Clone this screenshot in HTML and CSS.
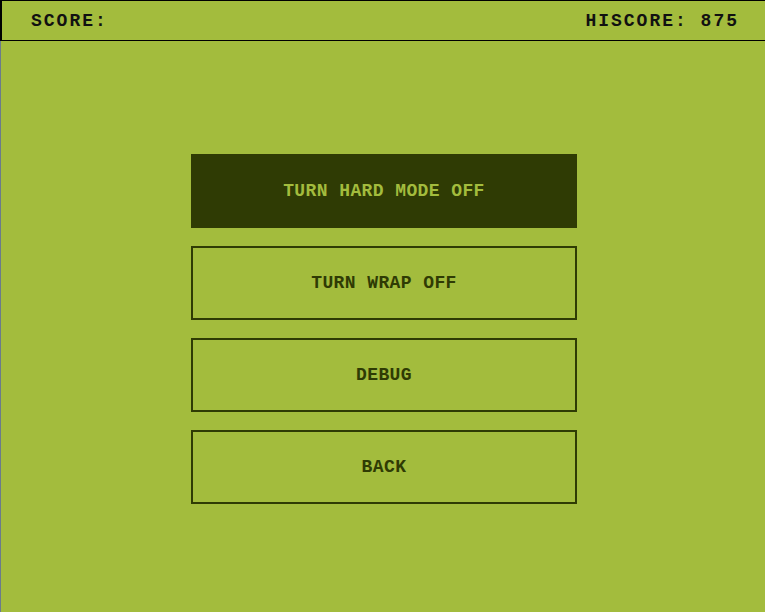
FILE: index.html
```html
<!DOCTYPE html>
<html>
<head>
<meta charset="utf-8">
<link rel="stylesheet" href="styles.css">
</head>
<body>
<div class="page">
  <header class="topbar">
    <span class="score">SCORE:</span>
    <span class="hiscore">HISCORE: 875</span>
  </header>
  <main class="stage">
    <nav class="menu">
      <button class="btn btn-active">TURN HARD MODE OFF</button>
      <button class="btn">TURN WRAP OFF</button>
      <button class="btn">DEBUG</button>
      <button class="btn">BACK</button>
    </nav>
  </main>
</div>
</body>
</html>
```
FILE: styles.css
```css
html, body {
  margin: 0;
  padding: 0;
  height: 100%;
}
body {
  background: #a3bc3d;
  font-family: "Courier New", Courier, FreeMono, "Nimbus Mono PS", "Liberation Mono", monospace;
  overflow: hidden;
}
.page {
  display: flex;
  flex-direction: column;
  height: 100%;
}
.topbar {
  display: flex;
  justify-content: space-between;
  align-items: center;
  height: 39px;
  border-top: 1px solid #000;
  border-bottom: 1px solid #000;
  border-left: 2px solid #000;
  padding: 0 28px 0 29px;
  font-weight: bold;
  font-size: 18px;
  letter-spacing: 2px;
  color: #111;
}
.hiscore {
  margin-right: -2px;
}
.stage {
  flex: 1;
  border-left: 1px solid #6b7b8c;
}
.menu {
  display: flex;
  flex-direction: column;
  align-items: center;
  gap: 18px;
  padding: 113px 0 0 2px;
}
.btn {
  width: 386px;
  height: 74px;
  box-sizing: border-box;
  border: 2px solid #2f3b04;
  background: transparent;
  color: #2f3b04;
  font-family: "Courier New", Courier, FreeMono, "Nimbus Mono PS", "Liberation Mono", monospace;
  font-weight: bold;
  font-size: 18px;
  letter-spacing: 0.4px;
  padding: 0;
  cursor: pointer;
}
.btn-active {
  background: #2f3b04;
  color: #a3bc3d;
}
```
